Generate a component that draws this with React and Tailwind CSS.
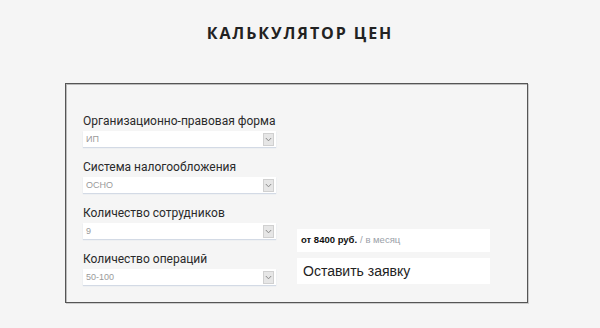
import React from "react";

function Select({ value }) {
  return (
    <div className="flex h-[16px] w-[193px] items-center justify-between bg-white shadow-[0_1px_1px_rgba(150,170,200,0.35)]">
      <span className="pl-[3px] text-[9px] leading-none text-[#9a9a9a]">{value}</span>
      <span className="mr-[2px] flex h-[13px] w-[11px] items-center justify-center border border-[#d0d0d0] bg-[#e6e6e6]">
        <svg width="7" height="5" viewBox="0 0 7 5">
          <path d="M0.8 1 L3.5 3.8 L6.2 1" fill="none" stroke="#8a8a8a" strokeWidth="1" />
        </svg>
      </span>
    </div>
  );
}

function Field({ label, value }) {
  return (
    <div className="flex flex-col">
      <div
        className="whitespace-nowrap text-[12px] leading-[16px] text-[#2a2a2a]"
        style={{ fontFamily: 'Roboto, "Liberation Sans", sans-serif' }}
      >
        {label}
      </div>
      <div className="mt-[2px]">
        <Select value={value} />
      </div>
    </div>
  );
}

export default function App() {
  return (
    <div
      className="h-[328px] w-[600px] bg-[#f5f5f5]"
      style={{ fontFamily: '"Liberation Sans", Arial, sans-serif' }}
    >
      <div className="flex h-[83px] justify-center pt-[22px]">
        <h1
          className="text-[16px] font-bold leading-[22px] tracking-[0.12em] text-[#222]"
          style={{ fontFamily: '"Open Sans", "Liberation Sans", sans-serif' }}
        >
          КАЛЬКУЛЯТОР ЦЕН
        </h1>
      </div>
      <div className="ml-[65px] flex h-[220px] w-[463px] gap-[21px] border border-[#555] bg-[#f5f5f5] pl-[17px] pt-[29px] shadow-[inset_1px_1px_0_#bbb,1px_1px_0_#ccc]">
        <div className="flex w-[193px] flex-col gap-[12px]">
          <Field label="Организационно-правовая форма" value="ИП" />
          <Field label="Система налогообложения" value="ОСНО" />
          <Field label="Количество сотрудников" value="9" />
          <Field label="Количество операций" value="50-100" />
        </div>
        <div className="flex flex-col pt-[116px]">
          <div className="flex h-[23px] w-[193px] items-center bg-white pl-[4px] text-[9.5px]">
            <span className="font-bold text-[#111]">от 8400 руб.</span>
            <span className="ml-[3px] text-[#9aa0a8]">/ в месяц</span>
          </div>
          <div className="mt-[6px] flex h-[26px] w-[193px] items-center bg-white pl-[6px] text-[14px] text-[#222]">
            Оставить заявку
          </div>
        </div>
      </div>
    </div>
  );
}
